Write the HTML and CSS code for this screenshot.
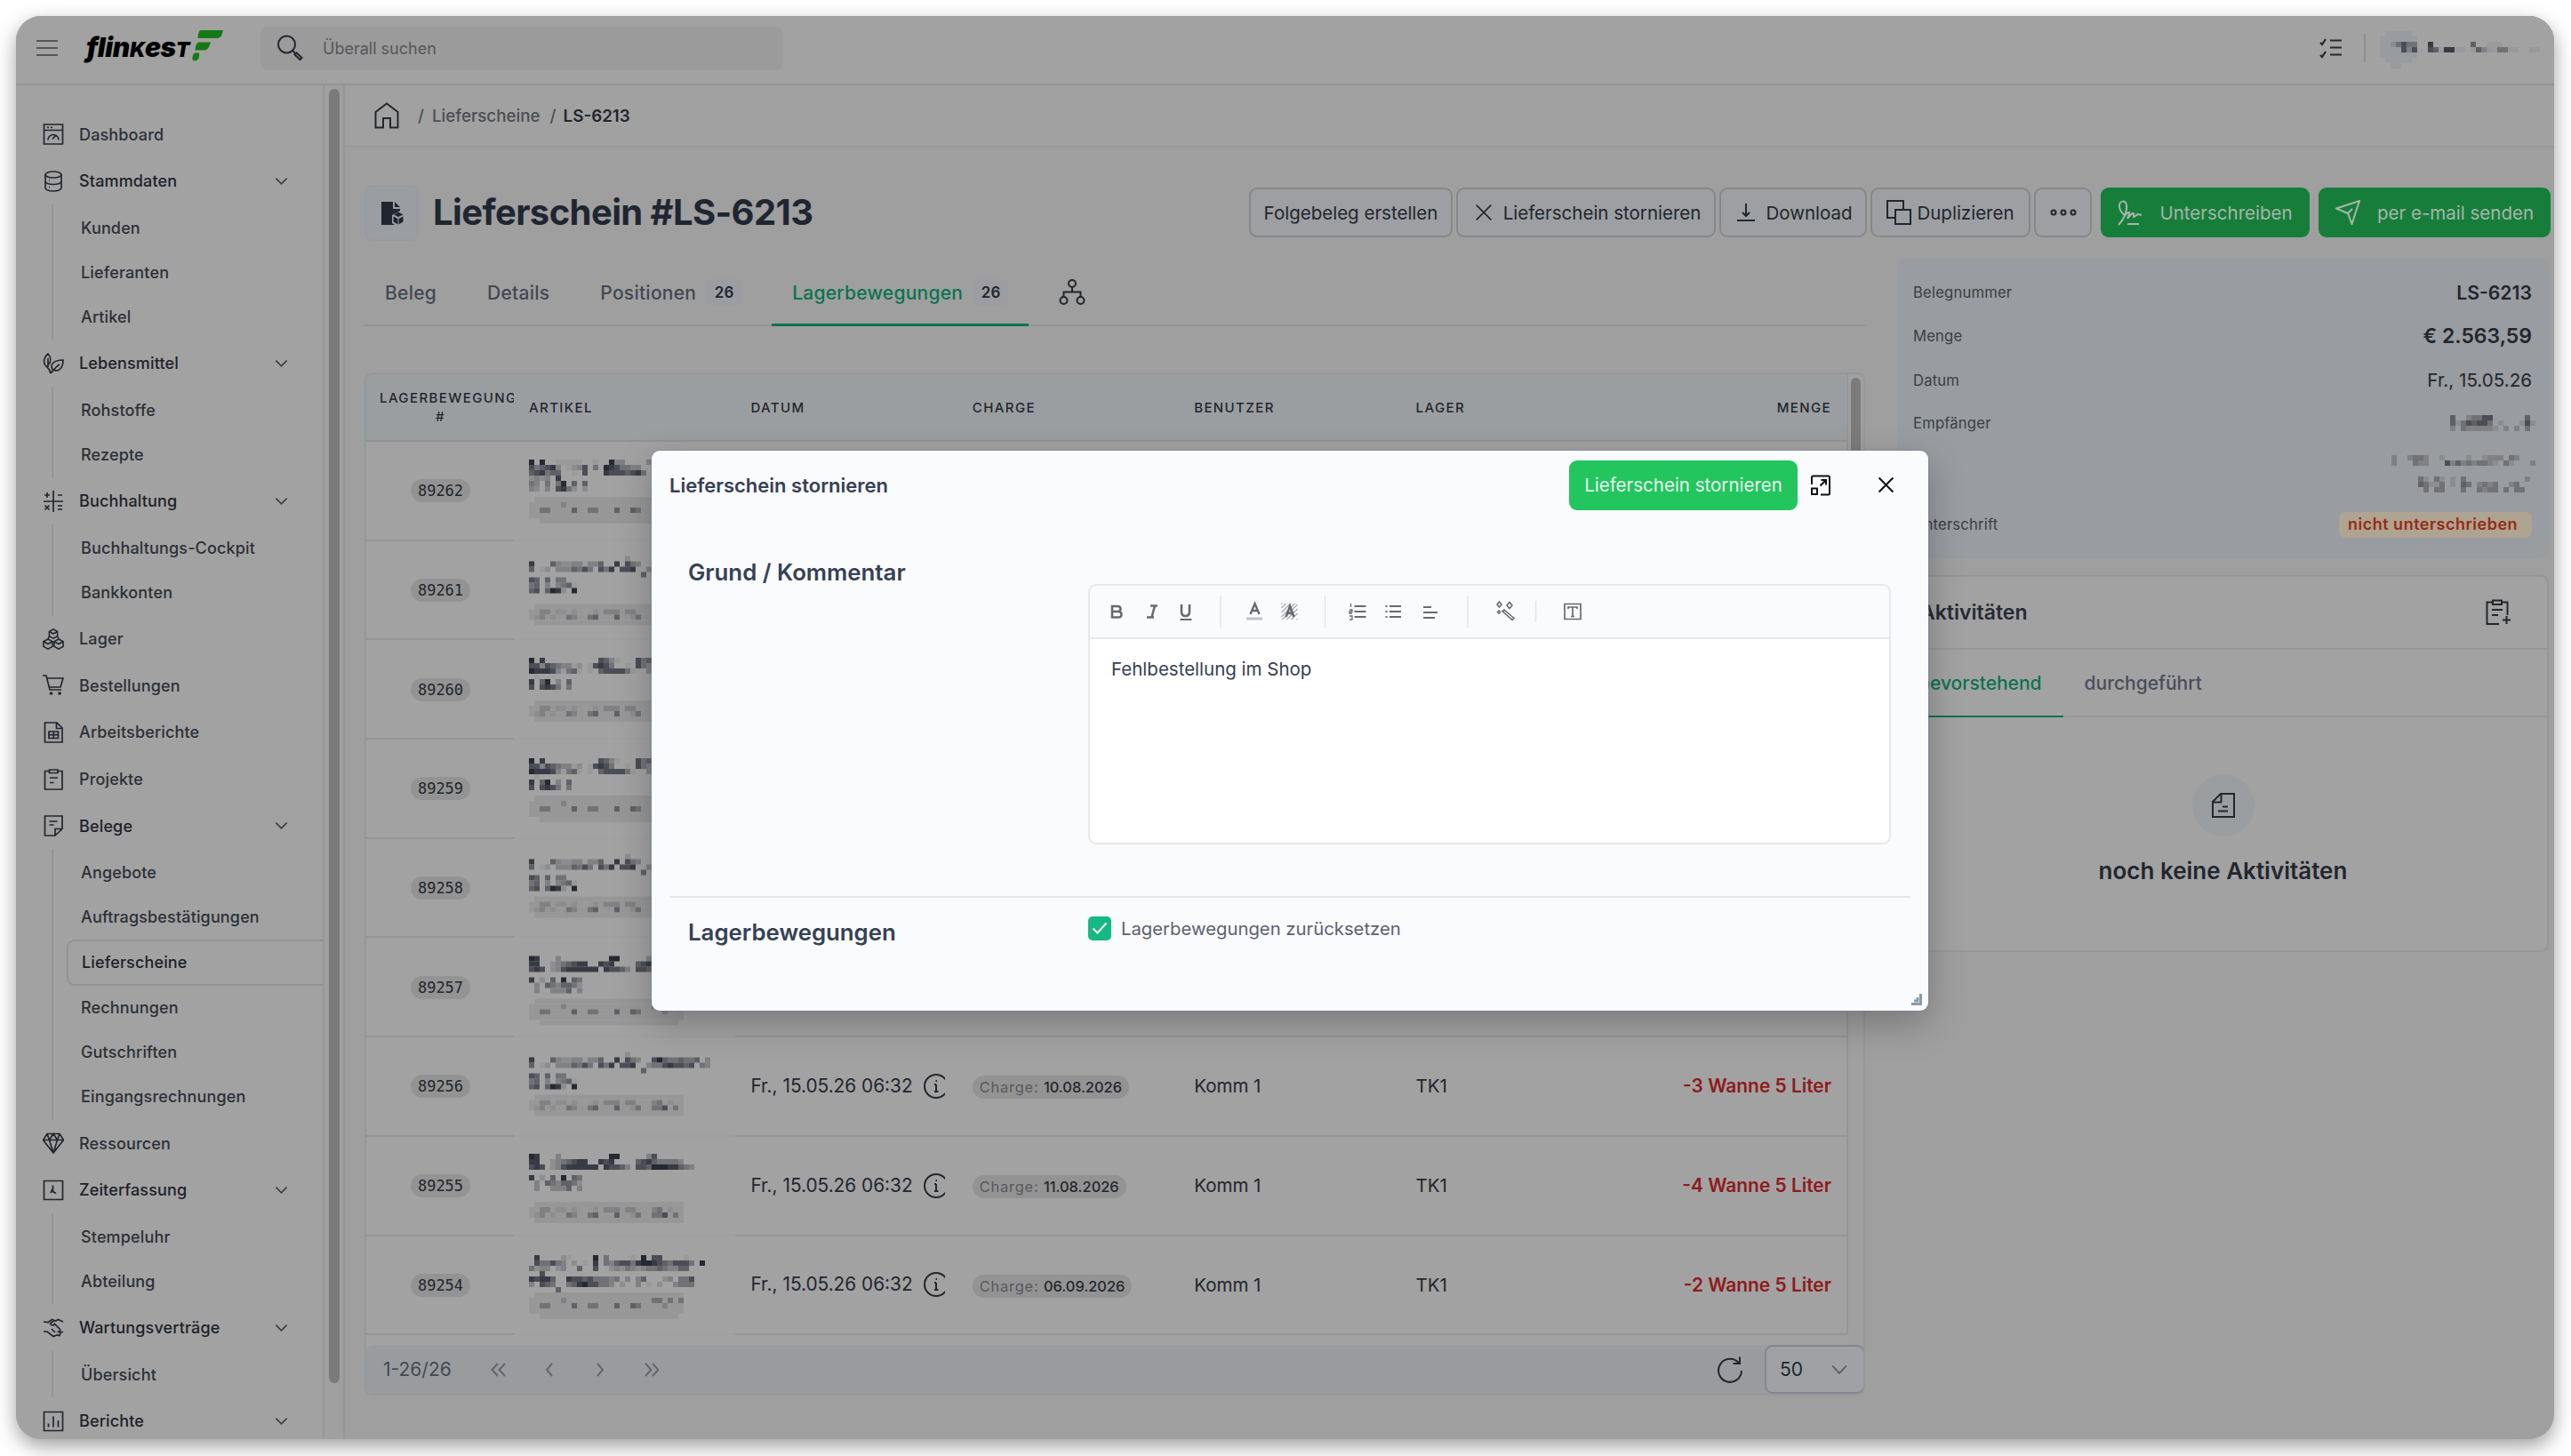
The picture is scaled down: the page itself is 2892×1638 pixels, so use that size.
FILE: index.html
```html
<!DOCTYPE html>
<html lang="de">
<head>
    <meta charset="utf-8">
    <meta name="viewport" content="width=device-width, initial-scale=1">
    <title>Lieferschein #LS-6213</title>
    <link rel="stylesheet" href="styles.css">
</head>
<body>

<!-- icon sprite -->
<svg width="0" height="0" class="sprite">
    <symbol id="i-dash" viewBox="0 0 24 24"><path d="M1.5 1h21v22h-21zM1.5 7.5h21M5 4.3h2M9 4.3h2M6 18.5a6 6 0 1 1 12 0M11 17.5l3.5-4"/></symbol>
    <symbol id="i-db" viewBox="0 0 24 24"><ellipse cx="12" cy="4.5" rx="9" ry="3.5"/><path d="M3 4.5v15c0 2 4 3.5 9 3.5s9-1.5 9-3.5v-15M3 12c0 2 4 3.5 9 3.5s9-1.5 9-3.5M7 11h1M7 18.5h1"/></symbol>
    <symbol id="i-leaf" viewBox="0 0 24 24"><path d="M9 23c-1-5-3-6-6-9C0 10 2 4 6 1c4 4 3 9 1 12M6 6v10M9 23c3-3 6-8 10-10M11 19c-3-6 1-11 12-11 0 9-5 14-11 11"/></symbol>
    <symbol id="i-calc" viewBox="0 0 24 24"><path d="M12 0v24M1 12h22M2 5h6M5 2v6M17 5h5M2.5 16.5l5 5M7.5 16.5l-5 5M17 17h5M17 21h5"/></symbol>
    <symbol id="i-boxes" viewBox="0 0 26 26"><path d="M13 1l5 2.8v5.5L13 12 8 9.3V3.8zM8 3.8l5 2.7 5-2.7M6.5 13l5.5 3v6l-5.5 3L1 22v-6zM1 16l5.5 3L12 16M19.5 13l5.5 3v6l-5.5 3-5.5-3v-6zM14 16l5.5 3 5.5-3M6.5 13L8 9.3M19.5 13L18 9.3"/></symbol>
    <symbol id="i-cart" viewBox="0 0 24 24"><path d="M0 1h4l4 16h13M5 4h18l-3 10H7.5"/><circle cx="9.5" cy="21" r="1"/><circle cx="19" cy="21" r="1"/></symbol>
    <symbol id="i-sheet" viewBox="0 0 24 24"><path d="M2.5 1H16l6 6v16H2.5zM15.5 1v6.5H22M7 11h10.5v7.5H7zM7 14.7h10.5M12.3 11v7.5"/></symbol>
    <symbol id="i-clip" viewBox="0 0 24 24"><path d="M7.5 2.5h-5V23H22V2.5h-5M7.5 1H17v3.5H7.5zM8 10h9M8 15.5h4.5"/></symbol>
    <symbol id="i-note" viewBox="0 0 24 24"><path d="M2.5 1H22v14.5L14 23H2.5zM22 15.5h-8V23M7.5 7h9M7.5 11h5"/></symbol>
    <symbol id="i-gem" viewBox="0 0 24 24"><path d="M5 1.5h14l4.5 7L12 23 .5 8.5zM.5 8.5h23M7.5 8.5L12 23l4.5-14.5M5 1.5l2.5 7 4.5-7 4.5 7 2.5-7"/></symbol>
    <symbol id="i-time" viewBox="0 0 24 24"><path d="M1.5 1.5h21v21h-21z"/><path d="M11.5 6.5v7l3.5 2M11.5 10l-2 4 2.5-.5"/></symbol>
    <symbol id="i-hands" viewBox="0 0 24 24"><path d="M1 5l5 .5 4.500-3 4 1.500 3-1.500 5.500 2.500M13 3.500L8.500 7c1 2.500 4 2.500 5 .5l6 6c1 2.500-1.500 3.500-3 2.500M1 16h4l7 5.500 4-1.500 3 .5 1.500-4H23M10 13l4 4"/></symbol>
    <symbol id="i-chart" viewBox="0 0 24 24"><path d="M1.5 1.5h21v21h-21zM6.5 14.5v4M12 6.5v12M17.5 11v7.5"/></symbol>
    <symbol id="i-down" viewBox="0 0 16 10"><path d="M1.5 1.5L8 8l6.5-6.5"/></symbol>
    <symbol id="i-x" viewBox="0 0 24 24"><path d="M2 2l20 20M22 2L2 22"/></symbol>
</svg>

<div class="window">
    <header class="topbar">
        <div class="burger"><i></i><i></i><i></i></div>
        <div class="logo">
            <span class="word">flin<small>K</small>es<small>T</small></span>
            <svg width="36" height="35" viewBox="0 0 36 35"><path fill="#157a15" d="M11 0h25l-1.500 5q-1.500 4-5.500 4H7.500q.5-9 3.500-9zM8.500 13.500H22l-1.500 4Q19 22.500 14 22.500H4.500q0-7 4-9zM3.500 25.500h5.500q1 9-5.500 9Q-1 33 3.500 25.500z"/></svg>
        </div>
        <div class="search">
            <svg width="30" height="30" viewBox="0 0 30 30" class="ic"><circle cx="11.5" cy="11" r="9.5"/><path d="M18 18l3.5 3.500M20.500 22.500l2-2 6 5.500-2 2z"/></svg>
            <span>Überall suchen</span>
        </div>
        <div class="top-right">
            <svg width="26" height="24" viewBox="0 0 26 24" class="ic"><path d="M1 6l2 2 4-6M1 20l2 2 4-6M12 3.5h13M12 11.5h13M12 19.5h13" stroke-width="2.2"/></svg>
            <span class="sep"></span>
            <svg class="pix" width="196" height="48" data-top="5" data-px=".bbbbb|bbbbbbb|bb24644..7.......5..111|bbbb636..6517711.153a14411..11|bbbbbbb|.bbbbb|..bb"></svg>
        </div>
    </header>

    <div class="body">
        <nav class="sidebar">
            <a class="top"><svg class="ic"><use href="#i-dash"/></svg>Dashboard</a>
            <a class="top open"><svg class="ic"><use href="#i-db"/></svg>Stammdaten<svg class="chev"><use href="#i-down"/></svg></a>
            <div class="subs"><a>Kunden</a><a>Lieferanten</a><a>Artikel</a></div>
            <a class="top open"><svg class="ic"><use href="#i-leaf"/></svg>Lebensmittel<svg class="chev"><use href="#i-down"/></svg></a>
            <div class="subs"><a>Rohstoffe</a><a>Rezepte</a></div>
            <a class="top open"><svg class="ic"><use href="#i-calc"/></svg>Buchhaltung<svg class="chev"><use href="#i-down"/></svg></a>
            <div class="subs"><a>Buchhaltungs-Cockpit</a><a>Bankkonten</a></div>
            <a class="top"><svg class="ic"><use href="#i-boxes"/></svg>Lager</a>
            <a class="top"><svg class="ic"><use href="#i-cart"/></svg>Bestellungen</a>
            <a class="top"><svg class="ic"><use href="#i-sheet"/></svg>Arbeitsberichte</a>
            <a class="top"><svg class="ic"><use href="#i-clip"/></svg>Projekte</a>
            <a class="top open"><svg class="ic"><use href="#i-note"/></svg>Belege<svg class="chev"><use href="#i-down"/></svg></a>
            <div class="subs"><a>Angebote</a><a>Auftragsbestätigungen</a><a class="active">Lieferscheine</a><a>Rechnungen</a><a>Gutschriften</a><a>Eingangsrechnungen</a></div>
            <a class="top"><svg class="ic"><use href="#i-gem"/></svg>Ressourcen</a>
            <a class="top open"><svg class="ic"><use href="#i-time"/></svg>Zeiterfassung<svg class="chev"><use href="#i-down"/></svg></a>
            <div class="subs"><a>Stempeluhr</a><a>Abteilung</a></div>
            <a class="top open"><svg class="ic"><use href="#i-hands"/></svg>Wartungsverträge<svg class="chev"><use href="#i-down"/></svg></a>
            <div class="subs"><a>Übersicht</a></div>
            <a class="top open"><svg class="ic"><use href="#i-chart"/></svg>Berichte<svg class="chev"><use href="#i-down"/></svg></a>
        </nav>
        <div class="side-scroll"><div></div></div>

        <main>
            <div class="crumbs">
                <svg width="28" height="30" viewBox="0 0 28 30" class="ic"><path d="M1.5 11L14 1.5 26.5 11v17.5H18V18h-8v10.500H1.500z"/></svg>
                <span class="slash">/</span><span>Lieferscheine</span><span class="slash">/</span><b>LS-6213</b>
            </div>

            <div class="headline">
                <div class="doc-icon">
                    <svg width="26" height="28" viewBox="0 0 26 28"><path fill="#202630" d="M1 1h13v8h8v2l-9 5v9l3 2H1zM16 1l6 6h-6zM20 12.5l5.5 3L20 18l-5-2.5zM14.5 17.5l5 2.5v6.5l-5-3zM25.5 17.5v6l-5 3V20z"/></svg>
                </div>
                <h1>Lieferschein #LS-6213</h1>
                <div class="actions">
                    <button style="width:229px">Folgebeleg erstellen</button>
                    <button class="shift" style="width:292px"><svg width="20" height="20" class="ic"><use href="#i-x"/></svg>Lieferschein stornieren</button>
                    <button class="shift" style="width:166px"><svg width="20" height="22" viewBox="0 0 20 22" class="ic"><path d="M10 1v14M6 11l4 4 4-4M0 20h20"/></svg>Download</button>
                    <button class="tight" style="width:180px"><svg width="28" height="28" viewBox="0 0 28 28" class="ic"><path d="M1 1h18v19H1zM10 11h17v16H10z"/><path d="M11 12h15v14H11z" fill="#9d9fa2" stroke="none"/></svg>Duplizieren</button>
                    <button style="width:65px"><svg width="30" height="8" viewBox="0 0 30 8" class="ic"><circle cx="4" cy="4" r="2.5"/><circle cx="15" cy="4" r="2.5"/><circle cx="26" cy="4" r="2.5"/></svg></button>
                    <button class="green" style="width:235px"><svg width="28" height="29" viewBox="0 0 28 29"><path d="M1 28C7 22 11 13 10 6 9 0 2 0 2 7c0 5 3 8 7 11M7 19c4-5 7-7 6-3l-2 5c4-5 6-7 7-6v4c2 0 3-3 5-3l4 1M11 27h13"/></svg>Unterschreiben</button>
                    <button class="green" style="width:261px"><svg width="28" height="28" viewBox="0 0 28 28"><path d="M1 9.5L27 1 18.5 27l-4.5-12zM14 15l5-5"/></svg>per e-mail senden</button>
                </div>
            </div>

            <div class="columns">
                <section class="left">
                    <div class="tabs">
                        <a>Beleg</a><a>Details</a><a>Positionen<em>26</em></a><a class="on">Lagerbewegungen<em>26</em></a>
                        <a><svg width="30" height="30" viewBox="0 0 30 30" class="ic"><circle cx="15" cy="5" r="4"/><circle cx="5.5" cy="24" r="4"/><circle cx="24.5" cy="24" r="4"/><path d="M15 9v5.5M5.5 20v-5.5h19V20"/></svg></a>
                    </div>

                    <div class="grid">
                        <div class="scroller">
                            <table id="moves">
                                <thead>
                                <tr>
                                    <th class="nr">LAGERBEWEGUNG <span>#</span></th>
                                    <th>ARTIKEL</th>
                                    <th>DATUM</th>
                                    <th>CHARGE</th>
                                    <th>BENUTZER</th>
                                    <th>LAGER</th>
                                    <th class="qty">MENGE</th>
                                </tr>
                                </thead>
                                <tbody></tbody>
                            </table>
                            <div class="track"><div></div></div>
                        </div>
                        <div class="pager">
                            <span>1-26/26</span>
                            <svg width="190" height="18" viewBox="0 0 190 18"><path d="M9 2L2.5 9 9 16M17 2l-6.5 7 6.5 7M70 2l-6 7 6 7M121 2l6 7-6 7M175 2l6.5 7-6.5 7M183 2l6.5 7-6.5 7"/></svg>
                            <svg width="30" height="32" viewBox="0 0 30 32" class="ic reload"><path d="M25 8.5A13 13 0 1 0 28 17M26 1.5V9h-7.5"/></svg>
                            <div class="select">50<svg width="18" height="12" viewBox="0 0 16 10"><path d="M1 1l7 7.5L15 1"/></svg></div>
                        </div>
                    </div>
                </section>

                <aside>
                    <dl class="facts">
                        <div><dt>Belegnummer</dt><dd class="strong">LS-6213</dd></div>
                        <div><dt>Menge</dt><dd class="strong big">€ 2.563,59</dd></div>
                        <div><dt>Datum</dt><dd>Fr., 15.05.26</dd></div>
                        <div class="short"><dt>Empfänger</dt><dd><svg class="pix" width="96" height="18" data-top="0" data-px="5..344661.....5.|52465664.2...262|3.4333332.3.3.4."></svg></dd></div>
                        <div class="addr"><dt></dt><dd><svg class="pix" width="162" height="42" data-top="0" data-px="3..3443..2....2..2333.43...|3...433...6353434432.42...3|||.....42.42.2.4...........3|.....54224.2.54.3434..34...|......4.44...4..4344.4.44.."></svg></dd></div>
                        <div><dt>Unterschrift</dt><dd><mark>nicht unterschrieben</mark></dd></div>
                    </dl>

                    <div class="acts">
                        <div class="acts-head"><span>Aktivitäten</span>
                            <svg width="28" height="30" viewBox="0 0 28 30" class="ic"><path d="M8 3.5H1.5V28H15M18 3.5h6.5V18M8 1.5h10V6H8zM7 12h12M7 18h7M19 23.500h9M23.500 19v9"/></svg>
                        </div>
                        <div class="acts-tabs"><a class="on">bevorstehend</a><a>durchgeführt</a></div>
                        <div class="acts-body">
                            <div class="dot"><svg width="26" height="28" viewBox="0 0 26 28" class="ic"><path d="M10 1h15v26H1V10zM10.5 1v9.5H1M12 15.5h6M7 20.5h11"/></svg></div>
                            <p>noch keine Aktivitäten</p>
                        </div>
                    </div>
                </aside>
            </div>
        </main>
    </div>
</div>

<!-- dialog -->
<div class="modal">
    <div class="modal-head">
        <h2>Lieferschein stornieren</h2>
        <button class="confirm">Lieferschein stornieren</button>
        <svg width="24" height="24" viewBox="0 0 24 24" class="expand"><path d="M2 11V3q0-1.500 1.500-1.500h17Q22 1.500 22 3v18q0 1.500-1.500 1.500H12M2 15.500h6V22H2zM11.500 12.500L18 6M12.500 6H18v5.500"/></svg>
        <svg width="19" height="19" class="close"><use href="#i-x"/></svg>
    </div>
    <div class="modal-row comment">
        <h3>Grund / Kommentar</h3>
        <div class="editor">
            <div class="tools">
                <svg width="560" height="36" viewBox="0 0 560 36">
                    <g stroke-width="2.6"><path d="M3 12h6q3.500 0 3.500 3T9 18H3zM3 18h7q3.500 0 3.500 3.300T10 24.500H3zM46 11.500h8M42 24.500h8M51 11.500l-3.500 13M81 10v8q0 5 4.500 5t4.500-5v-8"/><path stroke-width="1.8" d="M79.500 27h13"/></g>
                    <path class="bar" d="M125 0v36M242.500 0v36M403 0v36M479.500 6v24"/>
                    <g transform="translate(2.500 0)">
                        <path stroke-width="2.4" d="M156 21l5-12 5 12M158 17h6"/><path stroke="#bfc3c8" stroke-width="3" d="M151.500 26h18"/>
                        <path stroke-width="1" d="M191 14l5-5M191 19l10-10M191 24l15-15M192 27l17-17M197 27l12-12M202 27l7-7M191 9h1M208 27h1"/><path stroke-width="2.6" d="M196 24l4.500-12 4.500 12M198 20h5"/>
                        <path stroke-width="2.2" d="M273 12h13M273 18h13M273 24h13"/>
                        <path stroke-width="1.3" d="M269 9v4M267.500 16h3v2h-3v2h3M267.500 23h3v4h-3"/>
                    </g>
                    <path stroke-width="2.2" d="M315 12h13M315 18h13M315 24h13M310.500 12h2M310.500 18h2M310.500 24h2M353 13h9M353 19h16M353 25h13"/>
                    <path stroke-width="1.6" d="M444 16l11 9.500-2 2-11-10zM436 10l2.500-3 2.500 3-2.500 3zM447 11l3-3.500 3 3.500-3 3.500zM436.500 18.500l1.500-1.500 1.500 1.500-1.500 1.500z"/>
                    <path stroke-width="1.7" d="M512 9.500h18v17h-18zM516 15v-2h10v2M521 13v10M519 23.500h4"/>
                </svg>
            </div>
            <div class="text">Fehlbestellung im Shop</div>
        </div>
    </div>
    <div class="modal-row reset">
        <h3>Lagerbewegungen</h3>
        <label><i class="check"><svg width="18" height="14" viewBox="0 0 18 14"><path d="M1.5 7.5l5 5 10-11"/></svg></i>Lagerbewegungen zurücksetzen</label>
    </div>
    <svg class="grip" width="12" height="13" viewBox="0 0 12 13"><path d="M0 11.5h10.500V0M3 8h4V4"/></svg>
</div>

<script>
    // booking rows: number, batch date, quantity, offset and blocks of the censored article
    const badgeA = '||.aaaaaaaaaaaaaaaaaaaaaaaaaaaa|aaaaaa3aaaaaaaaaaaaaaaa44a4a4|aa44aaaa5aa44aaa5aa54aaaa3aaa|aaaaaaaaaaaaaaaaaaaaaaaaaaaaa|..aaaaaaaaaaaaaaaaaaaaaaaaaa';
    const badgeB = '|.aaaaaaaaaaaaaaaaaaaaaaaaaaaa|aa33a22a2a1a2a333a33aaa34a2aa|a23a2aa43aa45aaa5aa24aa446a4a|.aaaaaaaaaaaaaaaaaaaaaaaaaaaa';
    const textA = '|8.8..11111..1..833....34|645673.1236.4.8764433|567455..1.6...76665674|2323.7|43.4.48.5.5|32.3.6742.2';
    const textB = '..................2|7...5322331335..7.643..685445445.3|5.12.3335464.647.667..344676656.43|.....................5|65.5.44|45.3.3451|56.5872.8';
    const textC = '|8.7..........6531...645|6636543312.16764..1.6431.645443|8777631451.1.5666641..3466755|.1|7.58.3.5|6.6764.4';
    const textD = '|87...3.........88.....36|77..2345677..767....567544443|676.236777777.76653.66588877543||7.2.5.8.54|.3.5435542|.3..3335.3';
    const rows = [
        [89262, '08.08.2026', '-2 Wanne 5 Liter', 14, textA + badgeA],
        [89261, '10.08.2026', '-1 Wanne 5 Liter', 16.5, textB + '||' + badgeB],
        [89260, '11.08.2026', '-2 Wanne 5 Liter', 13, textC + '||' + badgeB],
        [89259, '08.08.2026', '-3 Wanne 5 Liter', 15, textC + badgeA],
        [89258, '12.08.2026', '-1 Wanne 5 Liter', 16.5, textB + '|' + badgeB],
        [89257, '12.08.2026', '-1 Wanne 5 Liter', 13.5, textD + badgeA],
        [89256, '10.08.2026', '-3 Wanne 5 Liter', 16.5, textB + '|' + badgeB],
        [89255, '11.08.2026', '-4 Wanne 5 Liter', 13, textD + '||' + badgeB],
        [89254, '06.09.2026', '-2 Wanne 5 Liter', 15, '|.7....21....8.4....1.8.66....1|.644643.2.1.7.43566478876546664.8|4233.23..5..6..232432344543355.|..6|76775..7665644434.3.35...23.446|3.654..457866443.2..3.1.2..3444|.....5' + badgeA.slice(1)]
    ];

    const tbody = document.querySelector('#moves tbody');
    rows.forEach(r => {
        const tr = tbody.insertRow();
        tr.innerHTML =
            '<td class="nr"><code>' + r[0] + '</code></td>' +
            '<td class="art"><svg class="pix" width="232" height="109" data-top="' + r[3] + '" data-px="' + r[4] + '"></svg></td>' +
            '<td class="date"><span>Fr., 15.05.26 06:32</span><svg width="24" height="28" viewBox="0 0 24 28" class="ic"><circle cx="14" cy="14" r="13"/><path d="M14 12v8M12 20h4.500M12 12h2M13.500 8h1.500"/></svg></td>' +
            '<td><span class="lot">Charge: <b>' + r[1] + '</b></span></td>' +
            '<td>Komm 1</td><td>TK1</td><td class="qty">' + r[2] + '</td>';
    });

    // paint the censored blocks, one 6px square per character
    const shades = {a: '#979797', b: '#989ba0', 1: '#999a9b', 2: '#8c8d8e', 3: '#808184', 4: '#717276', 5: '#5f6166', 6: '#4b4e56', 7: '#383b45', 8: '#262932'};
    document.querySelectorAll('.pix').forEach(svg => {
        const top = parseFloat(svg.dataset.top);
        let out = '';
        svg.dataset.px.split('|').forEach((line, y) => {
            [...line].forEach((c, x) => {
                if (shades[c]) out += '<rect x="' + x * 6 + '" y="' + (top + y * 6) + '" width="6" height="6" fill="' + shades[c] + '"/>';
            });
        });
        svg.innerHTML = out;
    });
</script>
</body>
</html>
```

FILE: styles.css
```css
* {
    box-sizing: border-box;
}

body {
    margin: 0;
    padding: 18px;
    width: 2892px;
    height: 1638px;
    overflow: hidden;
    background: #fff;
    font-family: Inter, "Liberation Sans", sans-serif;
    font-size: 20.5px;
    color: #22262e;
}

a { color: inherit; text-decoration: none; }
h1, h2, h3, p, dl, dd { margin: 0; }
svg { flex: none; fill: none; stroke: none; }
.sprite { position: absolute; }

button {
    font: inherit;
    font-size: 20.5px;
    color: inherit;
    padding: 0;
    border: 0;
    display: flex;
    align-items: center;
    justify-content: center;
}

.ic {
    fill: none;
    stroke: #22262e;
    stroke-width: 2;
}

.window {
    width: 2855px;
    height: 1601px;
    border-radius: 28px;
    overflow: hidden;
    background: #9f9f9f;
    box-shadow: 0 8px 22px rgba(0, 0, 0, .38);
    display: flex;
    flex-direction: column;
}

/* top bar */
.topbar {
    height: 78px;
    flex: none;
    background: #a2a2a2;
    border-bottom: 2px solid #949494;
    display: flex;
    align-items: center;
    padding-left: 23px;
    padding-bottom: 4px;
}

.burger { width: 24px; }
.burger i { display: block; height: 2px; margin: 6px 0; background: #55575c; }

.logo {
    display: flex;
    width: 228px;
    padding-left: 32px;
    color: #000;
    font-size: 30px;
    font-weight: 900;
    font-style: italic;
    letter-spacing: -.4px;
}

.logo .word { width: 118px; line-height: 38px; }
.logo small { font-size: 23px; }

.search {
    width: 587px;
    height: 49px;
    border-radius: 8px;
    background: #9b9b9b;
    display: flex;
    align-items: center;
    padding-left: 18px;
    gap: 22px;
    font-size: 18px;
    color: #54565a;
}

.top-right { margin-left: auto; display: flex; align-items: center; }
.sep { width: 2px; height: 32px; background: #8f9092; margin: 0 16px 0 24px; }

/* sidebar */
.body { flex: 1; display: flex; min-height: 0; }

.sidebar {
    width: 347px;
    flex: none;
    padding-top: 29px;
    background: #a2a2a2;
    border-right: 2px solid #979797;
    overflow: hidden;
    font-size: 18px;
    font-weight: 500;
    letter-spacing: .15px;
    color: #2c3037;
}

.sidebar a { display: flex; align-items: center; }
.sidebar .top { height: 52.6px; padding: 0 39px 0 30px; }
.sidebar .top .ic { width: 24px; height: 24px; margin-right: 17px; stroke-width: 1.7; }
.sidebar .open { color: #1d2129; }
.chev { width: 15px; height: 10px; margin-left: auto; stroke: #3a3d43; stroke-width: 1.8; }

.subs {
    margin-left: 40px;
    padding: 1.2px 0;
    border-left: 2px solid #969696;
}

.subs a { height: 50px; padding-left: 31px; }
.subs .active {
    height: 52px;
    margin-left: 15px;
    padding-left: 15px;
    border: 2px solid #919497;
    border-right: 0;
    border-radius: 9px 0 0 9px;
    color: #1d2129;
}

.side-scroll {
    width: 23px;
    flex: none;
    padding: 4px 6px 0 5px;
    background: #a0a0a0;
    border-right: 2px solid #969696;
}

.side-scroll div { width: 12px; height: 1456px; border-radius: 6px; background: #7b7b7b; }

/* page */
main { flex: 1; min-width: 0; }

.crumbs {
    height: 70px;
    background: #a1a1a1;
    border-bottom: 2px solid #989898;
    display: flex;
    align-items: center;
    padding-left: 33px;
    font-size: 18.8px;
    font-weight: 500;
    color: #4b4e54;
}

.crumbs .slash { margin: 0 8px 0 11px; }
.crumbs .ic + .slash { margin: 0 9px 0 21px; }
.crumbs b { font-weight: 600; color: #22262e; }

.headline { display: flex; align-items: center; height: 63px; margin: 42px 4px 0 22px; }

.doc-icon {
    width: 61px;
    height: 63px;
    border: 2px solid #989b9f;
    border-radius: 9px;
    background: #9a9da1;
    display: flex;
    align-items: center;
    justify-content: center;
}

h1 { font-size: 40px; font-weight: 700; letter-spacing: -.6px; line-height: 60px; margin: -2px 0 0 16px; color: #1f2631; }

.actions { margin-left: auto; margin-top: -1px; display: flex; gap: 4px; }

.actions button {
    height: 56px;
    border: 2px solid #85878a;
    border-radius: 9px;
    background: #9d9fa2;
    gap: 12px;
}

.actions .shift { padding-left: 4px; }
.actions .tight { gap: 6px; }
.actions .green { background: #167e3a; border: 0; color: #a5b6a9; margin-left: 6px; gap: 19px; }
.actions .green svg { stroke: #a5b6a9; stroke-width: 2; }

.columns { display: flex; margin: 20px 6px 0 22px; gap: 36px; }
.left { width: 1688px; }

.tabs {
    display: flex;
    gap: 11px;
    height: 76px;
    border-bottom: 2px solid #8f9599;
    font-size: 21px;
    font-weight: 500;
    letter-spacing: .25px;
    color: #424851;
}

.tabs a { padding: 0 23px; display: flex; align-items: center; height: 76px; }
.tabs em { width: 39px; margin-left: 12px; border-radius: 6px; text-align: center; font: 600 17px/30px Inter; background: #9b9da2; color: #22262e; }
.tabs .on { padding-top: 3px; color: #0b7350; border-bottom: 3px solid #0b7350; }

/* movement table */
.grid {
    margin-top: 52px;
    border: 2px solid #94999c;
    border-radius: 9px;
    background: #a2a2a2;
    overflow: hidden;
}

.scroller { display: flex; height: 1092px; overflow: hidden; }
.track { flex: 1; padding: 4px 3px; background: #a0a0a0; }
.track div { height: 320px; border-radius: 6px; background: #7b7b7b; }

#moves { border-collapse: collapse; table-layout: fixed; width: 1667px; flex: none; border-right: 2px solid #959697; height: 1081px; }

#moves th {
    width: 249.4px;
    height: 75px;
    padding: 0 17px;
    background: #9b9ea1;
    border-bottom: 2px solid #909396;
    font-size: 15px;
    font-weight: 500;
    letter-spacing: 1.4px;
    line-height: 21px;
    text-align: left;
    overflow: hidden;
}

#moves th.nr { width: 166px; padding: 0 0 0 15px; text-align: center; }
#moves th.nr span { margin-right: 14px; }
#moves th.qty { width: auto; }
#moves td { height: 111.7px; padding: 0 17px; border-bottom: 2px solid #939596; }
#moves td.nr { text-align: center; padding: 0 0 0 1px; }
#moves td.art { padding: 0 0 0 17px; border-bottom-color: #a0a0a0; }
#moves .art svg { display: block; }
#moves .qty { text-align: right; }
#moves td.qty { font-size: 20.9px; font-weight: 600; color: #8f1b1b; white-space: nowrap; }
#moves .date { white-space: nowrap; padding-right: 0; font-size: 20.8px; }
#moves .date .ic { margin-left: 12px; vertical-align: -7px; }

code {
    display: inline-block;
    height: 26px;
    padding: 0 8px;
    border-radius: 13px;
    background: #939393;
    font: 17px/26px "DejaVu Sans Mono", monospace;
}

.lot { padding: 3px 8px; border-radius: 13px; background: #939393; font-size: 16.4px; letter-spacing: .8px; color: #57595d; }
.lot b { font-weight: 500; letter-spacing: 0; color: #22262e; }

.pager {
    height: 55px;
    display: flex;
    align-items: center;
    padding-left: 19px;
    background: #999b9f;
    border-radius: 9px;
    color: #454951;
    font-size: 21px;
}

.pager > svg:not(.ic) { margin-left: 43px; stroke: #63666b; stroke-width: 2; }
.reload { margin-left: auto; margin-right: 24px; }
.select {
    width: 113px;
    height: 55px;
    margin-right: -2px;
    padding: 0 18px 0 15px;
    border: 2px solid #83868f;
    border-radius: 9px;
    background: #9fa1a4;
    display: flex;
    align-items: center;
    justify-content: space-between;
    color: #22262e;
}
.select svg { stroke: #5e636c; stroke-width: 1.7; }

/* right column */
aside { flex: 1; }

.facts { height: 337px; padding: 13px 19px 0 18px; background: #999ca0; border-radius: 9px; }
.facts > div { height: 49.5px; display: flex; align-items: center; justify-content: space-between; }
.facts dt { font-size: 16.6px; color: #3a3e45; letter-spacing: .2px; }
.facts dd { font-size: 20.6px; }
.facts dd svg { display: block; margin-right: -4px; }
.facts .strong { font-size: 21.2px; font-weight: 600; }
.facts .big { font-size: 23px; }
.facts .short { height: 46px; }
.facts .addr { height: 67px; padding-top: 2px; }
.facts mark { display: block; width: 217px; height: 29px; padding-left: 10px; border-radius: 7px; background: #afa391; color: #962c14; font-size: 18px; font-weight: 600; letter-spacing: .5px; line-height: 28px; }

.acts { height: 424px; margin-top: 19px; border: 2px solid #94979a; border-radius: 9px; background: #a2a2a2; }
.acts-head { height: 82px; padding: 0 41px 0 24px; display: flex; align-items: center; justify-content: space-between; border-bottom: 2px solid #94979a; font-size: 23px; font-weight: 600; color: #262b34; }
.acts-tabs { height: 76px; display: flex; border-bottom: 2px solid #94999c; font-size: 21px; font-weight: 500; color: #4a4e5a; }
.acts-tabs a { height: 76px; padding: 0 24px 2px; display: flex; align-items: center; }
.acts-tabs .on { padding-left: 22px; padding-bottom: 0; color: #0b7350; border-bottom: 2px solid #0b7350; }
.acts-body { padding-top: 64px; text-align: center; }
.dot { width: 70px; height: 70px; margin: 0 auto 23px; border-radius: 50%; background: #9b9ea0; display: flex; align-items: center; justify-content: center; }
.acts-body p { font-size: 26px; font-weight: 600; }

/* dialog */
.modal {
    position: absolute;
    left: 733px;
    top: 507px;
    width: 1436px;
    height: 630px;
    border-radius: 9px;
    background: #fafbfd;
    box-shadow: 0 0 0 1px rgba(110, 125, 160, .5), 0 14px 40px rgba(0, 0, 0, .25);
    color: #364154;
}

.modal-head { display: flex; align-items: center; height: 77px; margin-bottom: 1px; padding: 0 38px 0 20px; }
h2 { font-size: 22px; font-weight: 600; }
.confirm { width: 257px; height: 56px; margin-left: auto; border-radius: 9px; background: #22c55e; color: #e9fbef; }
.expand, .close { stroke: #111; stroke-width: 2; }
.expand { margin: 0 52px 0 14px; }
.close { stroke-width: 2.6; }

.modal-row { display: flex; margin: 0 20px; padding-left: 21px; }
.modal-row h3 { width: 450px; font-size: 25.8px; font-weight: 600; line-height: 32px; }
.comment { height: 425px; padding-top: 43px; border-bottom: 2px solid #e3e6ee; }
.editor { width: 903px; height: 293px; margin-top: 29px; border: 2px solid #e5e8ee; border-radius: 9px; background: #fff; overflow: hidden; }
.tools { height: 60px; padding: 11px 0 0 22px; background: #fafbfd; border-bottom: 2px solid #e5e8ee; }
.tools svg { stroke: #666b73; display: block; }
.tools .bar { stroke: #e2e5ea; stroke-width: 1.5; }
.text { padding: 21px 24px; line-height: 26px; }
.reset { padding-top: 20px; }
.reset h3 { padding-top: 3px; }
.reset label { display: flex; align-items: center; height: 28px; font-size: 20.3px; color: #5b6270; }
.check { width: 26px; height: 27px; margin-right: 11px; border-radius: 5px; background: #16b981; display: flex; align-items: center; justify-content: center; }
.check svg { stroke: #fff; stroke-width: 2; }
.grip { position: absolute; right: 7px; bottom: 6px; stroke: #8f99ab; stroke-width: 3; }
```
